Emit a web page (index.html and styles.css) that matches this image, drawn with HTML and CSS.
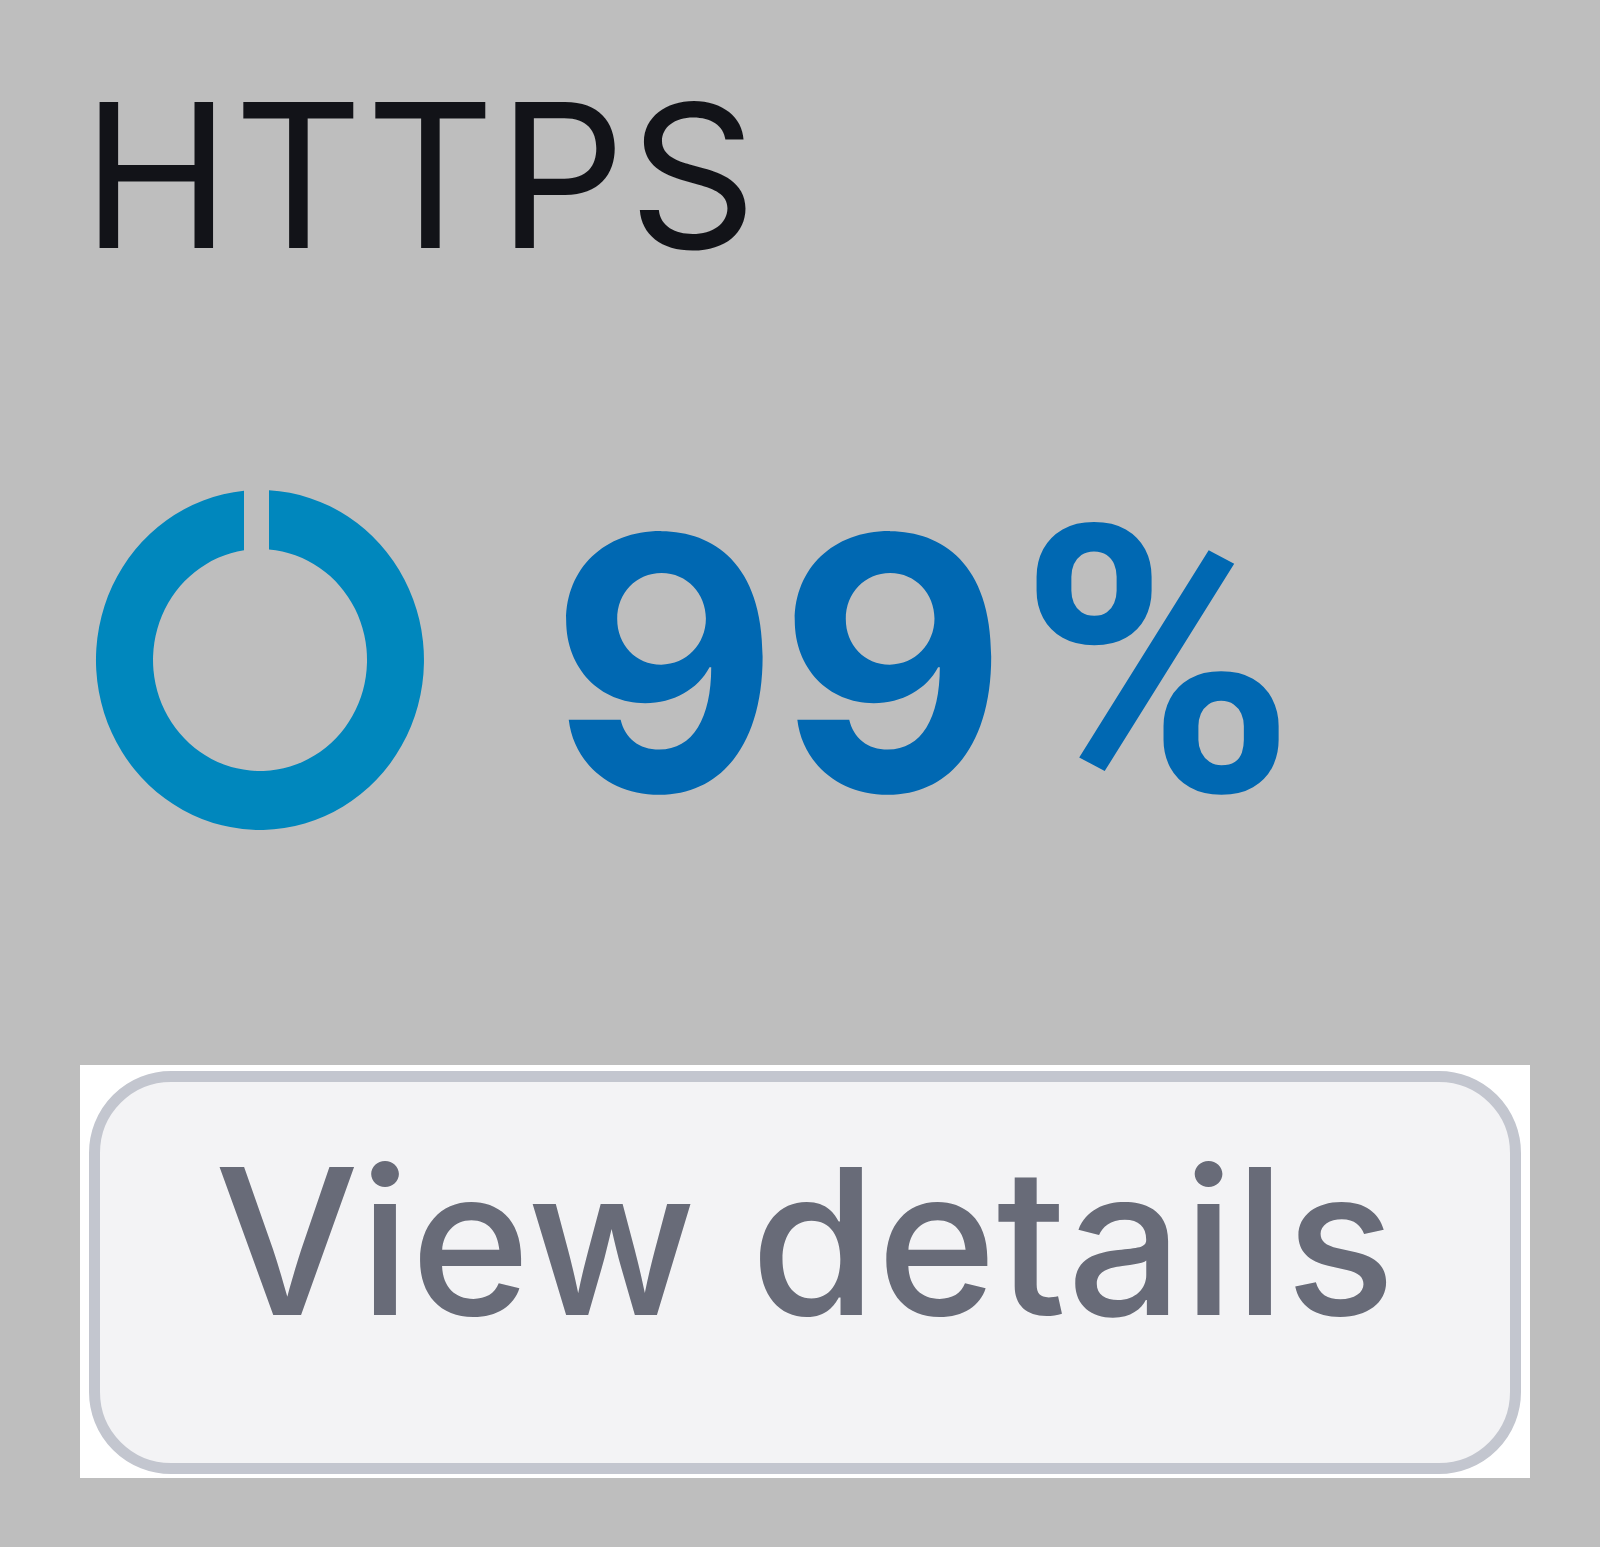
FILE: index.html
```html
<!DOCTYPE html>
<html lang="en">
<head>
    <meta charset="utf-8">
    <title>HTTPS</title>
    <link rel="stylesheet" href="styles.css">
</head>
<body>

<div id="widget">
    <!-- Metric name -->
    <h1 id="metric-title">HTTPS</h1>

    <!-- Ring + value -->
    <div id="metric-row">
        <svg id="ring" width="340" height="350" viewBox="-170 -175 340 350">
            <!-- 99% ring, small notch at the top -->
            <path d="M 9 -169.74 A 164 170 0 1 1 -16 -169.19 L -16 -109.75 A 107 111 0 1 0 9 -110.61 Z"
                  fill="#0087bd"/>
        </svg>
        <span id="metric-value">99<span class="pct">%</span></span>
    </div>

    <div id="details-box">
        <button id="details-button">View details</button>
    </div>
</div>

</body>
</html>
```

FILE: styles.css
```css
        body {
            margin: 0;
            padding: 0;
            background-color: #bebebe;
            font-family: Inter, "Noto Sans", sans-serif;
        }

        #widget {
            height: 1547px;
            padding: 0;
            box-sizing: border-box;
        }

        #metric-title {
            margin: 0;
            padding: 75px 0 0 82px;
            font-size: 200px;
            font-weight: 400;
            line-height: 1;
            letter-spacing: 3px;
            color: #121318;
        }

        #metric-row {
            display: flex;
            align-items: center;
            margin-top: 194px;
            padding-left: 90px;
            gap: 120px;
        }

        #ring {
            display: block;
        }

        #metric-value {
            margin-top: 8px;
            font-size: 352px;
            font-weight: 700;
            line-height: 1;
            color: #0068b2;
        }

        /* percent sign is narrower than Inter's */
        #metric-value .pct {
            font-family: Roboto, sans-serif;
            font-size: 373px;
            margin-left: 12px;
        }

        #details-box {
            width: 1450px;
            margin: 215px 0 0 80px;
            padding: 6px 9px 4px 9px;
            box-sizing: border-box;
            background-color: white;
        }

        #details-button {
            display: block;
            width: 100%;
            height: 403px;
            border: 11px solid #c3c6cf;
            border-radius: 82px;
            background-color: #f3f3f5;
            font-family: Inter, "Noto Sans", sans-serif;
            font-size: 204px;
            font-weight: 500;
            line-height: 1;
            color: #686b78;
            padding: 0 0 64px 0;
            text-align: center;
        }
```
